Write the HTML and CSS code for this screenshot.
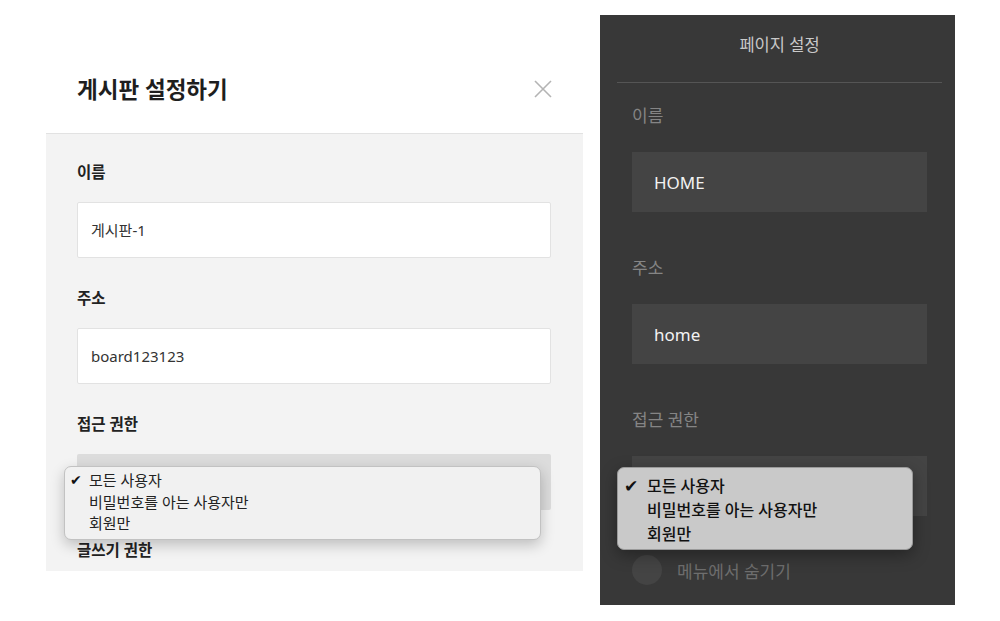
FILE: index.html
```html
<!DOCTYPE html>
<html lang="ko">
<head>
    <meta charset="UTF-8">
    <title>게시판 설정</title>
    <link rel="stylesheet" href="styles.css">
</head>
<body>

<div class="page">

    <!-- 게시판 설정 모달 -->
    <div class="board">
        <div class="board-head">
            <h1>게시판 설정하기</h1>
            <svg class="close" width="18" height="18" viewBox="0 0 18 18">
                <path d="M1 1 L17 17 M17 1 L1 17" stroke="#b4b4b4" stroke-width="1.6" fill="none"/>
            </svg>
        </div>
        <div class="board-body">
            <div class="field">
                <label>이름</label>
                <div class="input">게시판-1</div>
            </div>
            <div class="field">
                <label>주소</label>
                <div class="input">board123123</div>
            </div>
            <div class="field">
                <label>접근 권한</label>
                <div class="select">
                    <ul class="menu">
                        <li class="on">모든 사용자</li>
                        <li>비밀번호를 아는 사용자만</li>
                        <li>회원만</li>
                    </ul>
                </div>
            </div>
            <div class="field">
                <label>글쓰기 권한</label>
            </div>
        </div>
    </div>

    <!-- 페이지 설정 패널 -->
    <div class="panel">
        <div class="panel-head">페이지 설정</div>
        <div class="panel-body">
            <div class="dfield">
                <label>이름</label>
                <div class="dinput">HOME</div>
            </div>
            <div class="dfield">
                <label>주소</label>
                <div class="dinput">home</div>
            </div>
            <div class="dfield">
                <label>접근 권한</label>
                <div class="dselect">
                    <ul class="dmenu">
                        <li class="on">모든 사용자</li>
                        <li>비밀번호를 아는 사용자만</li>
                        <li>회원만</li>
                    </ul>
                </div>
            </div>
            <div class="toggle">
                <span class="knob"></span>
                <span>메뉴에서 숨기기</span>
            </div>
        </div>
    </div>

</div>

</body>
</html>
```

FILE: styles.css
```css
body {
    margin: 0;
    background: #fff;
    font-family: "Noto Sans", "Noto Sans CJK KR", sans-serif;
    color: #222;
}
.page {
    display: flex;
    align-items: flex-start;
    gap: 17px;
    padding: 15px 0 0 46px;
}

/* 왼쪽 모달 */
.board {
    width: 537px;
    margin-top: 33px;
}
.board-head {
    height: 85px;
    box-sizing: border-box;
    display: flex;
    align-items: center;
    justify-content: space-between;
    padding: 0 31px 4px 31px;
}
.board-head h1 {
    margin: 0;
    font-size: 22.5px;
    font-weight: bold;
    color: #1e1e1e;
}
.board-body {
    height: 438px;
    overflow: hidden;
    background: #f3f3f3;
    border-top: 1px solid #e2e2e2;
    padding: 26px 32px 0 31px;
    box-sizing: border-box;
}
.field {
    margin-bottom: 28px;
}
.field label {
    display: block;
    height: 24px;
    line-height: 24px;
    font-size: 15.5px;
    font-weight: bold;
    margin-bottom: 18px;
}
.input {
    height: 56px;
    box-sizing: border-box;
    background: #fff;
    border: 1px solid #e2e2e2;
    border-radius: 2px;
    padding: 0 13px;
    line-height: 54px;
    font-size: 15px;
    color: #333;
}
.select {
    position: relative;
    height: 56px;
    background: #dcdcdc;
    border-radius: 2px;
}
.menu {
    position: absolute;
    top: 12px;
    left: -13px;
    width: 477px;
    height: 74px;
    box-sizing: border-box;
    margin: 0;
    padding: 3px 0 0 0;
    list-style: none;
    background: #f1f1f1;
    border: 1px solid #c2c2c2;
    border-radius: 7px;
    box-shadow: 0 5px 14px rgba(0, 0, 0, 0.22);
}
.menu li {
    position: relative;
    padding-left: 24px;
    font-size: 15px;
    line-height: 21.5px;
    color: #222;
}
.menu li.on::before {
    content: "✔";
    position: absolute;
    left: 5px;
    font-family: "DejaVu Sans", sans-serif;
    font-size: 14px;
}
.menu li.on::before,
.dmenu li.on::before {
    color: #111;
}

/* 오른쪽 다크 패널 */
.panel {
    width: 355px;
    height: 590px;
    background: #383838;
    overflow: hidden;
}
.panel-head {
    height: 67px;
    line-height: 60px;
    text-align: center;
    font-size: 16.5px;
    color: #c9c9c9;
    margin: 0 13px 0 17px;
    border-bottom: 1px solid #555;
}
.panel-body {
    padding: 21px 28px 0 32px;
}
.dfield {
    margin-bottom: 44px;
}
.dfield label {
    display: block;
    height: 24px;
    line-height: 24px;
    font-size: 17px;
    color: #858585;
    margin-bottom: 24px;
}
.dinput {
    height: 60px;
    line-height: 62px;
    background: #444;
    padding: 0 22px;
    font-size: 17px;
    color: #f2f2f2;
}
.dselect {
    position: relative;
    height: 60px;
    background: #444;
}
.dmenu {
    position: absolute;
    top: 11px;
    left: -15px;
    width: 296px;
    height: 83px;
    box-sizing: border-box;
    margin: 0;
    padding: 6px 0 0 0;
    list-style: none;
    background: #c9c9c9;
    border: 1px solid #9a9a9a;
    border-radius: 7px;
    box-shadow: 0 5px 16px rgba(0, 0, 0, 0.35);
}
.dmenu li {
    position: relative;
    padding-left: 29px;
    font-size: 16px;
    font-weight: 500;
    line-height: 24px;
    color: #111;
}
.dmenu li.on::before {
    content: "✔";
    position: absolute;
    left: 6px;
    font-family: "DejaVu Sans", sans-serif;
    font-size: 17px;
}
.toggle {
    display: flex;
    align-items: center;
    gap: 15px;
    margin-top: -5px;
    font-size: 17px;
    color: #6e6e6e;
}
.knob {
    width: 30px;
    height: 30px;
    border-radius: 50%;
    background: #444;
}
```
